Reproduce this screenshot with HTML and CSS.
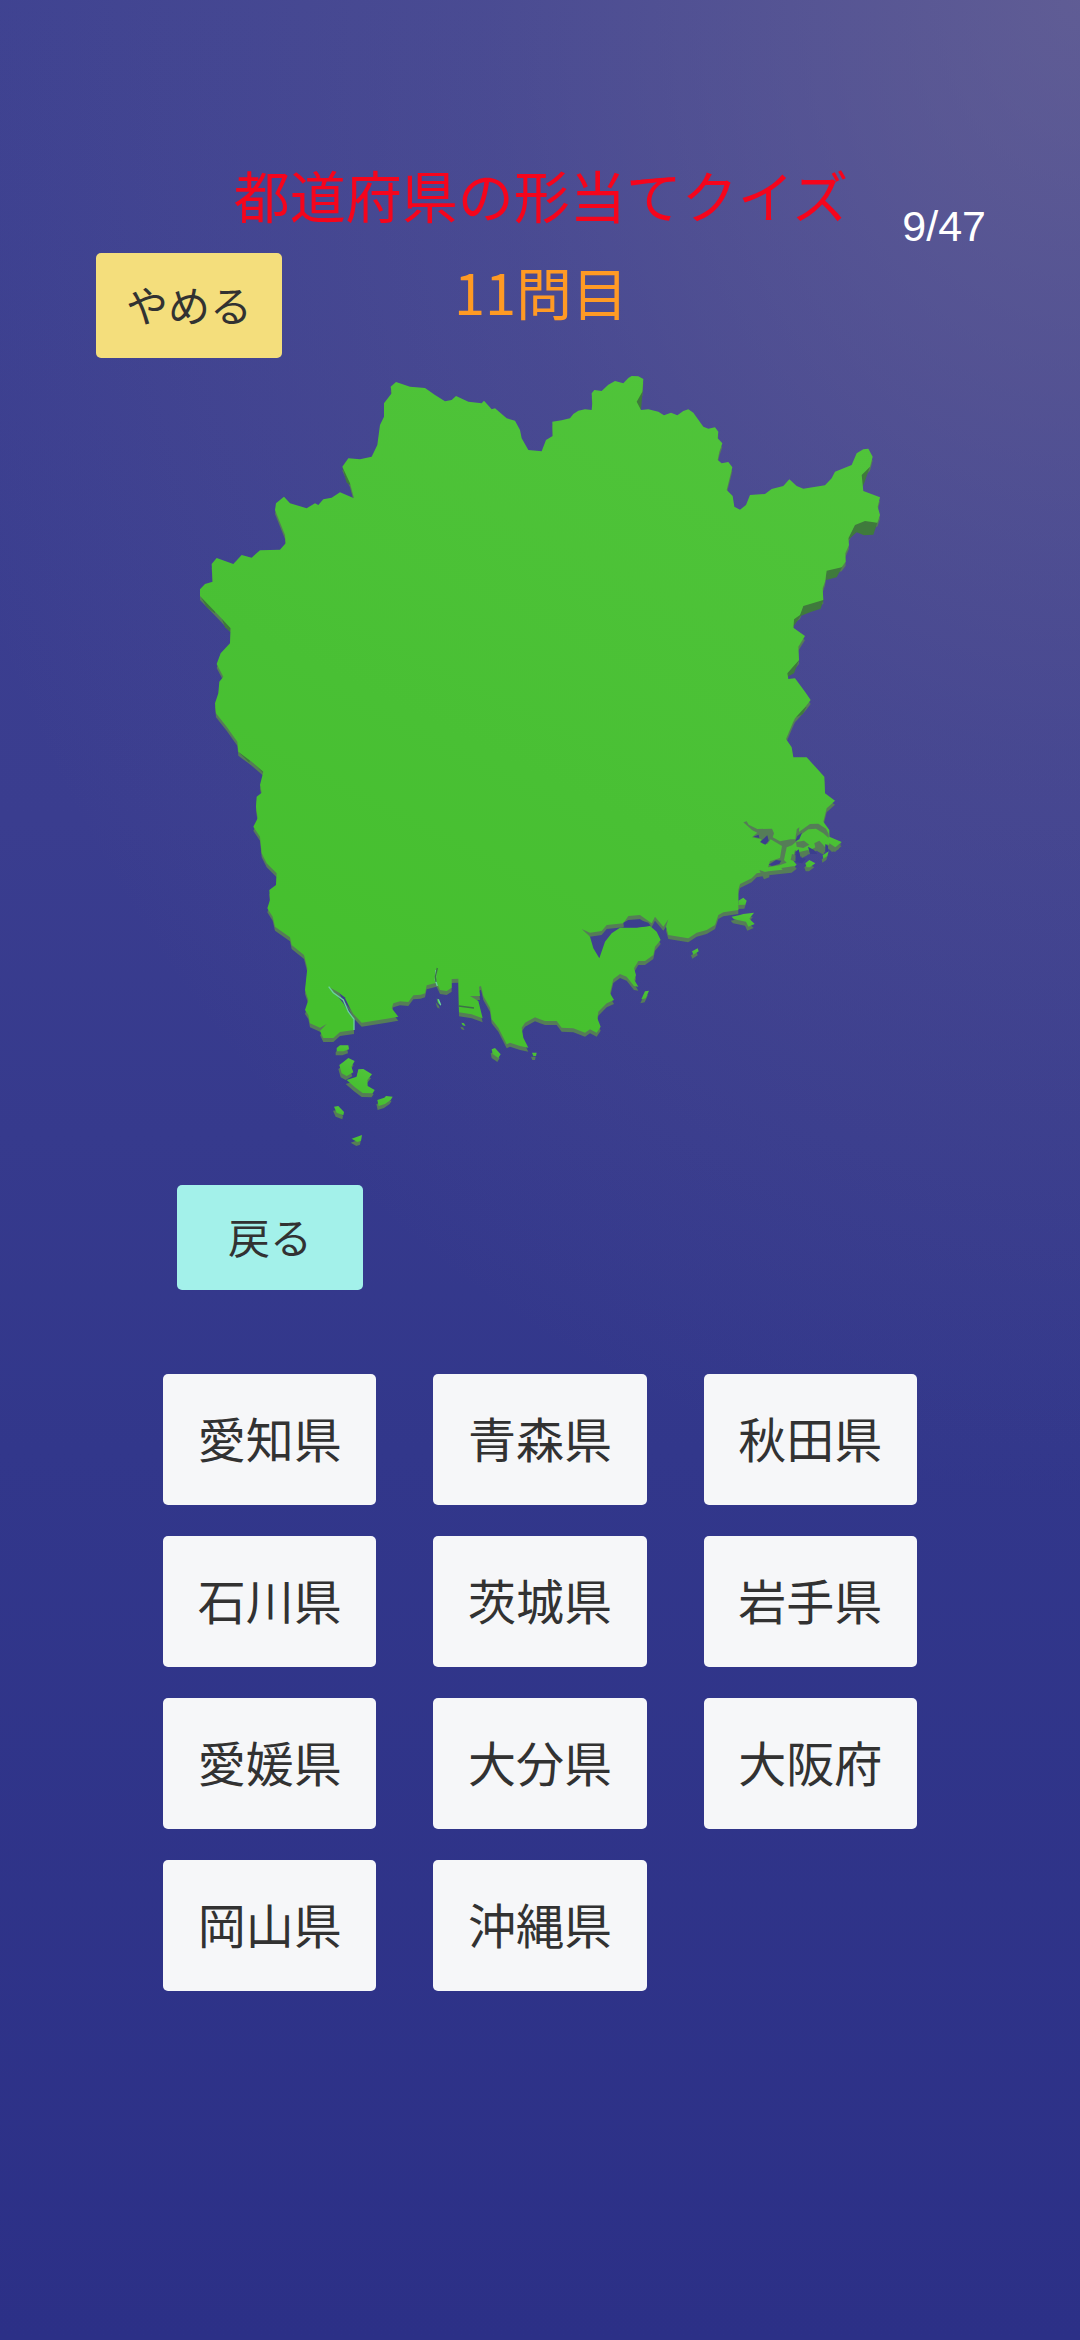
FILE: index.html
```html
<!DOCTYPE html>
<html lang="ja">
<head>
  <meta charset="UTF-8">
  <meta name="viewport" content="width=device-width, initial-scale=1.0">
  <title>都道府県の形当てクイズ</title>
  <link rel="stylesheet" href="styles.css">
</head>
<body>
  <header class="header">
    <h1 class="title">都道府県の形当てクイズ</h1>
    <span class="count">9/47</span>
    <button class="btn btn-quit" type="button">やめる</button>
    <h2 class="question">11問目</h2>
  </header>

  <main class="main">
    <!-- 県の形 -->
    <svg class="map" viewBox="0 0 2160 2400" aria-hidden="true">
      <defs>
        <linearGradient id="land" x1="0.8" y1="0" x2="0.3" y2="1">
          <stop offset="0" stop-color="#50c43a"/>
          <stop offset="0.6" stop-color="#49c034"/>
          <stop offset="1" stop-color="#45c02d"/>
        </linearGradient>
        <path id="body" d="M648 66L690 80L735 84L765 105L795 124L815 120L828 108L865 125L905 130L912 122L935 148L945 145L980 175L1005 182L1020 210L1025 235L1045 270L1085 274
          L1098 240L1118 228L1117 185L1145 181L1170 175L1180 162L1195 152L1215 148L1235 150L1237 130L1235 100L1243 90L1265 93L1285 74L1305 63L1330 70L1345 54L1355 48L1375 49L1390 57L1387 95L1370 125L1383 150L1405 148L1435 155L1452 166L1473 158L1492 166L1510 153L1525 148L1540 158
          L1570 200L1585 206L1605 202L1615 215L1613 235L1627 250L1618 275L1613 300L1625 310L1645 306L1657 322L1640 390L1658 408L1663 440L1680 449L1698 435L1710 405L1755 402L1775 387L1810 378L1828 358
          L1850 378L1870 386L1935 376L1955 355L1965 335L2015 315L2030 280L2050 268L2065 266L2078 290L2070 320L2045 345L2050 393L2100 412L2093 440L2100 465L2092 488L2055 483L2025 495L2005 535L2007 555L1996 580L1997 605
          L1985 622L1940 632L1935 665L1928 685L1930 720L1870 738L1860 765L1842 778L1840 803L1875 828L1855 860L1857 900L1822 940L1825 957L1845 955L1875 995L1892 1020L1875 1042L1845 1075
          L1840 1085L1818 1137L1835 1162L1840 1192L1880 1192L1910 1225L1933 1250L1935 1300L1965 1322L1940 1345L1930 1385
          L1948 1410L1948 1430L1985 1446L1965 1464L1940 1452L1930 1472L1910 1460L1890 1470L1860 1478L1845 1470L1838 1500L1850 1514L1835 1526L1800 1530L1765 1534L1730 1540L1715 1555L1680 1572L1675 1590
          L1675 1650L1655 1653L1630 1657L1615 1665L1605 1695L1580 1710L1550 1718L1525 1735L1465 1725L1458 1700L1465 1678L1450 1700L1425 1670L1415 1690L1380 1665L1345 1668L1330 1690L1280 1695L1265 1713L1230 1718L1205 1707
          L1230 1730L1240 1765L1258 1795L1275 1745L1295 1720L1320 1703L1370 1703L1410 1698L1430 1715L1442 1740L1425 1760L1420 1785L1395 1803L1375 1803L1362 1825L1368 1845L1363 1860L1375 1880L1362 1878L1340 1850L1320 1842L1300 1857L1290 1900L1302 1920
          L1280 1930L1255 1955L1252 1975L1262 2000L1250 2018L1230 2008L1215 2018L1180 2005L1145 2003L1130 1983L1095 1983L1080 1978
          L1065 1972L1035 1988L1025 2003L1030 2033L1045 2063L1020 2058L990 2048L980 2053L955 2003L935 1978L930 1943L910 1908L903 1878L897 1880L900 1908L870 1908L895 1923L908 1975L875 1963L837 1957L835 1856L815 1857L815 1883L800 1893L780 1890L770 1868L740 1876
          L735 1900L722 1904L700 1906L685 1926L660 1924L640 1930L635 1945L655 1970L620 1976L545 1988L520 1962L500 1925L478 1898L448 1882L470 1905L490 1930L505 1955L522 1980L522 2010L480 2016L460 2034L430 2034L420 2013L440 1992L420 2003L390 1990L385 1965L375 1950L385 1920L375 1890L382 1825L372 1785L335 1755L330 1732
          L285 1700L278 1670L262 1645L270 1620L268 1590L288 1575L290 1540L260 1510L245 1480L240 1430L220 1400L233 1375L228 1340L230 1310L245 1298L240 1275L250 1235L215 1205L175 1175L172 1145L140 1100L108 1060L105 1030
          L115 1000L118 965L130 950L110 912L122 880L150 850L152 805L120 770L60 708L60 688L75 672L98 665L95 612L110 594L160 612L185 585L215 593L240 571L300 569L317 550L315 525L285 450L288 430L312 410L330 430L380 445L405 430L415 435L430 418L455 413L480 397L522 415L510 370L487 320L505 295L540 298L575 290L592 255L600 195L612 170L612 130L635 100L632 80Z"/>
        <!-- 島 -->
        <g id="islands">
          <path d="M470 2064L480 2056L505 2056L507 2068L490 2074L470 2074Z"/>
          <path d="M478 2115L490 2106L505 2094L524 2103L514 2120L520 2137L500 2148L485 2140Z"/>
          <path d="M500 2160L530 2150L535 2128L550 2127L576 2143L562 2160L563 2178L584 2190L578 2200L548 2199L525 2182Z"/>
          <path d="M592 2220L613 2213L618 2208L638 2210L632 2220L615 2232L596 2238Z"/>
          <path d="M462 2240L475 2238L492 2256L490 2266L470 2258Z"/>
          <path d="M515 2336L546 2325L543 2342L532 2346Z"/>
          <path d="M935 2068L945 2064L962 2083L955 2094L938 2082Z"/>
          <path d="M1056 2078L1070 2078L1068 2088L1060 2088Z"/>
          <path d="M844 1988L852 1990L857 1998L848 1996Z"/>
          <path d="M770 1915L780 1926L782 1934L774 1930Z"/>
          <path d="M1536 1774L1553 1765L1556 1774L1540 1784Z"/>
          <path d="M1395 1894L1407 1892L1397 1915L1384 1918Z"/>
          <path d="M1675 1622L1690 1613L1700 1622L1696 1634L1675 1635Z"/>
          <path d="M1655 1670L1680 1665L1690 1662L1722 1658L1708 1676L1724 1692L1705 1700L1698 1685L1662 1678Z"/>
          <path d="M1876 1510L1888 1500L1906 1510L1890 1522L1880 1522Z"/>
          <path d="M1928 1486L1946 1474L1942 1488L1930 1496Z"/>
        </g>
      </defs>
      <g class="side">
        <use href="#body" transform="translate(0 12)"/>
        <use href="#islands" transform="translate(-3 12)"/>
      </g>
      <g class="side-dark">
        <path d="M2092 488L2080 524L2052 526L2030 517L2004 540L2025 490L2055 478Z"/>
        <path d="M1987 620L1970 652L1938 660L1938 628Z"/>
        <path d="M1931 718L1922 746L1892 756L1862 768L1840 800L1842 776L1862 760L1870 734Z"/>
        <path d="M1875 828L1850 862L1852 845Z"/>
        <path d="M1857 900L1842 940L1820 952L1822 936Z"/>
        <path d="M1880 1040L1868 1063L1848 1072L1850 1052Z"/>
        <path d="M1388 90L1383 150L1366 128Z"/>
        <path d="M2070 318L2056 360L2048 380L2043 344Z"/>
        <path d="M487 322L500 368L512 376L508 350Z"/>
        <path d="M60 706L80 742L105 760L104 742Z"/>
        <path d="M125 775L135 802L150 815L152 800Z"/>
        <path d="M175 1175L208 1208L212 1188L196 1182Z"/>
        <path d="M215 1203L250 1240L244 1220Z"/>
      </g>
      <g fill="url(#land)">
        <use href="#body"/>
        <use href="#islands"/>
      </g>
      <!-- 入り江 -->
      <g class="side">
        <path d="M1690 1387L1700 1384L1706 1394L1732 1407L1776 1406L1782 1420L1778 1432L1800 1444L1832 1438L1846 1438L1848 1422L1868 1408L1890 1392L1915 1391L1938 1406L1946 1422L1946 1434L1930 1420L1908 1406L1885 1408L1862 1424L1850 1444L1836 1456L1820 1462L1812 1500L1820 1508L1798 1516L1764 1522L1770 1504L1800 1494L1806 1458L1772 1438L1762 1452L1746 1450L1744 1438L1716 1432L1732 1418L1716 1410Z"/>
        <path d="M1850 1408L1858 1402L1856 1424L1848 1430Z"/>
        <path d="M1848 1446L1872 1442L1888 1454L1870 1464L1850 1460Z"/>
        <path d="M1903 1450L1918 1442L1938 1464L1930 1482L1908 1470Z"/>
        <path d="M1948 1450L1966 1462L1984 1448L1976 1468L1956 1476L1946 1466Z"/>
        <path d="M1858 1476L1884 1470L1882 1486L1866 1494Z"/>
        <path d="M1836 1482L1848 1486L1846 1504L1832 1500Z"/>
        <path d="M1738 1530L1768 1540L1768 1552L1752 1558Z"/>
        <path d="M1804 1524L1844 1518L1830 1536L1812 1536Z"/>
      </g>
      <g class="sea">
        <path d="M1740 1446L1762 1426L1766 1442L1756 1454Z"/>
        <path d="M1736 1424L1720 1430L1738 1434Z"/>
        <path d="M1766 1514L1788 1500L1804 1502L1798 1512L1776 1518Z"/>
        <path d="M1852 1428L1866 1418L1858 1438L1846 1444Z"/>
        <path d="M1846 1476L1856 1468L1862 1494L1878 1496L1866 1510L1848 1506Z"/>
        <path d="M1884 1460L1902 1470L1912 1482L1890 1482Z"/>
        <path d="M1936 1452L1944 1458L1944 1476L1936 1472Z"/>
        <path d="M1330 1688L1345 1680L1380 1680L1405 1688L1412 1697L1370 1702L1332 1702Z"/>
        <path d="M478 1900L494 1912L512 1950L490 1922Z"/>
      </g>
      <path class="highlight" d="M446 1880L460 1898L490 1920L505 1955L522 1978L522 2010M768 1830L766 1860L772 1878M775 1918L782 1936"/>
      <path class="crack" d="M772 1824L766 1850L768 1866M836 1938L882 1944"/>
    </svg>

    <button class="btn btn-back" type="button">戻る</button>

    <div class="answers">
      <button class="btn" type="button">愛知県</button>
      <button class="btn" type="button">青森県</button>
      <button class="btn" type="button">秋田県</button>
      <button class="btn" type="button">石川県</button>
      <button class="btn" type="button">茨城県</button>
      <button class="btn" type="button">岩手県</button>
      <button class="btn" type="button">愛媛県</button>
      <button class="btn" type="button">大分県</button>
      <button class="btn" type="button">大阪府</button>
      <button class="btn" type="button">岡山県</button>
      <button class="btn" type="button">沖縄県</button>
    </div>
  </main>
</body>
</html>
```

FILE: styles.css
```css
html, body {
  margin: 0;
  padding: 0;
}

body {
  min-height: 100vh;
  box-sizing: border-box;
  padding-top: 156px;
  font-family: "Noto Sans CJK JP", sans-serif;
  background: radial-gradient(ellipse 1200px 1500px at 100% 0, rgba(124, 115, 152, .55), rgba(124, 115, 152, .2) 50%, rgba(124, 115, 152, 0)),
    linear-gradient(#3d4191, #3a3d8f 35%, #32378b 62%, #2c3087);
}

.header {
  display: grid;
  grid-template-columns: 1fr auto 1fr;
  grid-template-rows: 82px auto;
  row-gap: 15px;
  padding: 0 94px 0 96px;
}
.title, .question {
  margin: 0;
  font-size: 56px;
  font-weight: normal;
  line-height: 76px;
}
.title {
  grid-column: 2;
  color: #f5051c;
}
.count {
  justify-self: end;
  align-self: end;
  font-family: "Liberation Sans", sans-serif;
  font-size: 43px;
  line-height: 24px;
  color: #fff;
}
.question {
  grid-area: 2 / 1 / 3 / 4;
  justify-self: center;
  color: #ff9a24;
}

.btn {
  height: 131px;
  padding: 0 0 5px;
  border: 0;
  border-radius: 5px;
  background: #f6f7f9;
  color: #323232;
  font-family: inherit;
  font-size: 48px;
}
.btn-quit, .btn-back {
  width: 186px;
  height: 105px;
  font-size: 42px;
}
.btn-quit {
  grid-area: 2 / 1 / 3 / 3;
  justify-self: start;
  background: #f4de7c;
}
.btn-back {
  align-self: start;
  margin: 25px 0 0 14px;
  background: #a3f1ea;
}

.main {
  display: flex;
  flex-flow: column;
  max-width: 754px;
  margin: 0 auto;
  padding-top: 2px;
}
.map {
  align-self: center;
  width: 100%;
  max-width: 720px;
}
.side {
  fill: #557d57;
}
.side-dark {
  fill: #3f7a3c;
}
.sea {
  fill: #3b3e8d;
}
.highlight {
  fill: none;
  stroke: #69d0a0;
  stroke-width: 4;
}
.crack {
  fill: none;
  stroke: #3d7048;
  stroke-width: 4;
}

.answers {
  display: grid;
  grid-template-columns: repeat(3, 1fr);
  gap: 31px 57px;
  margin: 84px 0;
}
```
